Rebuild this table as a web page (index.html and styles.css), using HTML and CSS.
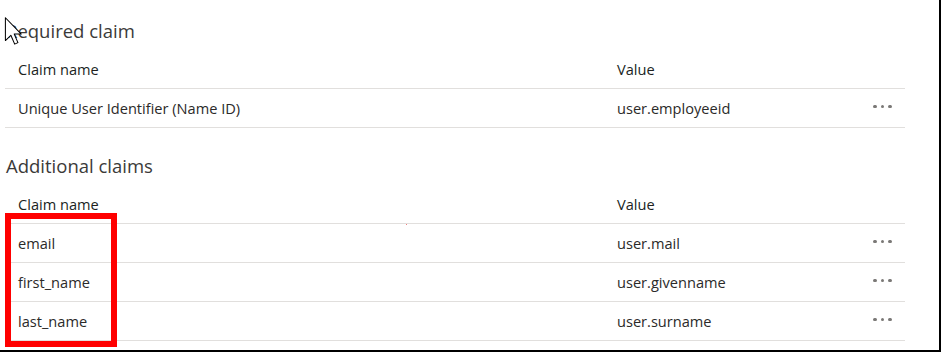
FILE: index.html
```html
<!DOCTYPE html>
<html lang="en">
<head>
    <meta charset="UTF-8">
    <meta name="viewport" content="width=device-width, initial-scale=1.0">
    <title>Attributes &amp; Claims</title>
    <link rel="stylesheet" href="styles.css">
</head>
<body>
    <div class="frame">
        <div class="claims">
            <h2 class="section-title">Required claim</h2>
            <div class="claim-table">
                <div class="claim-row head">
                    <span class="col-name">Claim name</span>
                    <span class="col-value">Value</span>
                    <span class="col-actions"></span>
                </div>
                <div class="claim-row">
                    <span class="col-name">Unique User Identifier (Name ID)</span>
                    <span class="col-value">user.employeeid</span>
                    <span class="col-actions"><span class="more"><i></i><i></i><i></i></span></span>
                </div>
            </div>

            <h2 class="section-title additional">Additional claims</h2>
            <div class="claim-table">
                <div class="claim-row head">
                    <span class="col-name">Claim name</span>
                    <span class="col-value">Value</span>
                    <span class="col-actions"></span>
                </div>
                <div class="claim-row">
                    <span class="col-name">email</span>
                    <span class="col-value">user.mail</span>
                    <span class="col-actions"><span class="more"><i></i><i></i><i></i></span></span>
                </div>
                <div class="claim-row">
                    <span class="col-name">first_name</span>
                    <span class="col-value">user.givenname</span>
                    <span class="col-actions"><span class="more"><i></i><i></i><i></i></span></span>
                </div>
                <div class="claim-row">
                    <span class="col-name">last_name</span>
                    <span class="col-value">user.surname</span>
                    <span class="col-actions"><span class="more"><i></i><i></i><i></i></span></span>
                </div>
            </div>
        </div>

        <!-- highlight box around the additional claim names -->
        <div class="highlight"></div>

        <!-- mouse pointer -->
        <svg class="pointer" width="19" height="28" viewBox="0 0 12 19">
            <path d="M0.5 0.5 L0.5 16 L4.2 12.4 L6.8 18.4 L9 17.4 L6.5 11.6 L11.3 11.6 Z" fill="#fff" stroke="#000" stroke-width="0.7" stroke-linejoin="round"/>
        </svg>
        <div class="dot-red"></div>
    </div>
</body>
</html>
```

FILE: styles.css
```css
body {
    margin: 0;
    padding: 0;
    background-color: #ffffff;
    font-family: "Open Sans", "Noto Sans", sans-serif;
    color: #323130;
}

.frame {
    position: relative;
    width: 941px;
    height: 352px;
    box-sizing: border-box;
    border-right: 2px solid #000;
    border-bottom: 2px solid #000;
    overflow: hidden;
}

.claims {
    padding: 19px 0 0 5px;
    width: 900px;
}

.section-title {
    margin: 0;
    padding-left: 1px;
    font-size: 18.5px;
    font-weight: 400;
    line-height: 24px;
    color: #3b3a39;
}

.section-title.additional {
    margin-top: 26px;
}

.claim-table {
    margin-top: 6px;
}

.claim-row {
    display: flex;
    align-items: center;
    height: 38px;
    border-bottom: 1px solid #e1dfdd;
    font-size: 14.6px;
    color: #2b2a29;
}

.claim-row.head {
    height: 39px;
    color: #201f1e;
}

.col-name {
    width: 599px;
    padding-left: 13px;
}

.col-value {
    flex: 1;
}

.col-actions {
    width: 32px;
    display: flex;
    align-items: center;
}

.more {
    display: flex;
    gap: 4px;
    margin-top: -3px;
}

.more i {
    display: block;
    width: 3.5px;
    height: 3.5px;
    border-radius: 50%;
    background-color: #7a7876;
}

.highlight {
    position: absolute;
    left: 5px;
    top: 213px;
    width: 100px;
    height: 122px;
    border: 6px solid #ff0000;
}

.pointer {
    position: absolute;
    left: 4px;
    top: 17px;
}

.dot-red {
    position: absolute;
    left: 406px;
    top: 224px;
    width: 1px;
    height: 1px;
    background-color: #f08080;
}
```
